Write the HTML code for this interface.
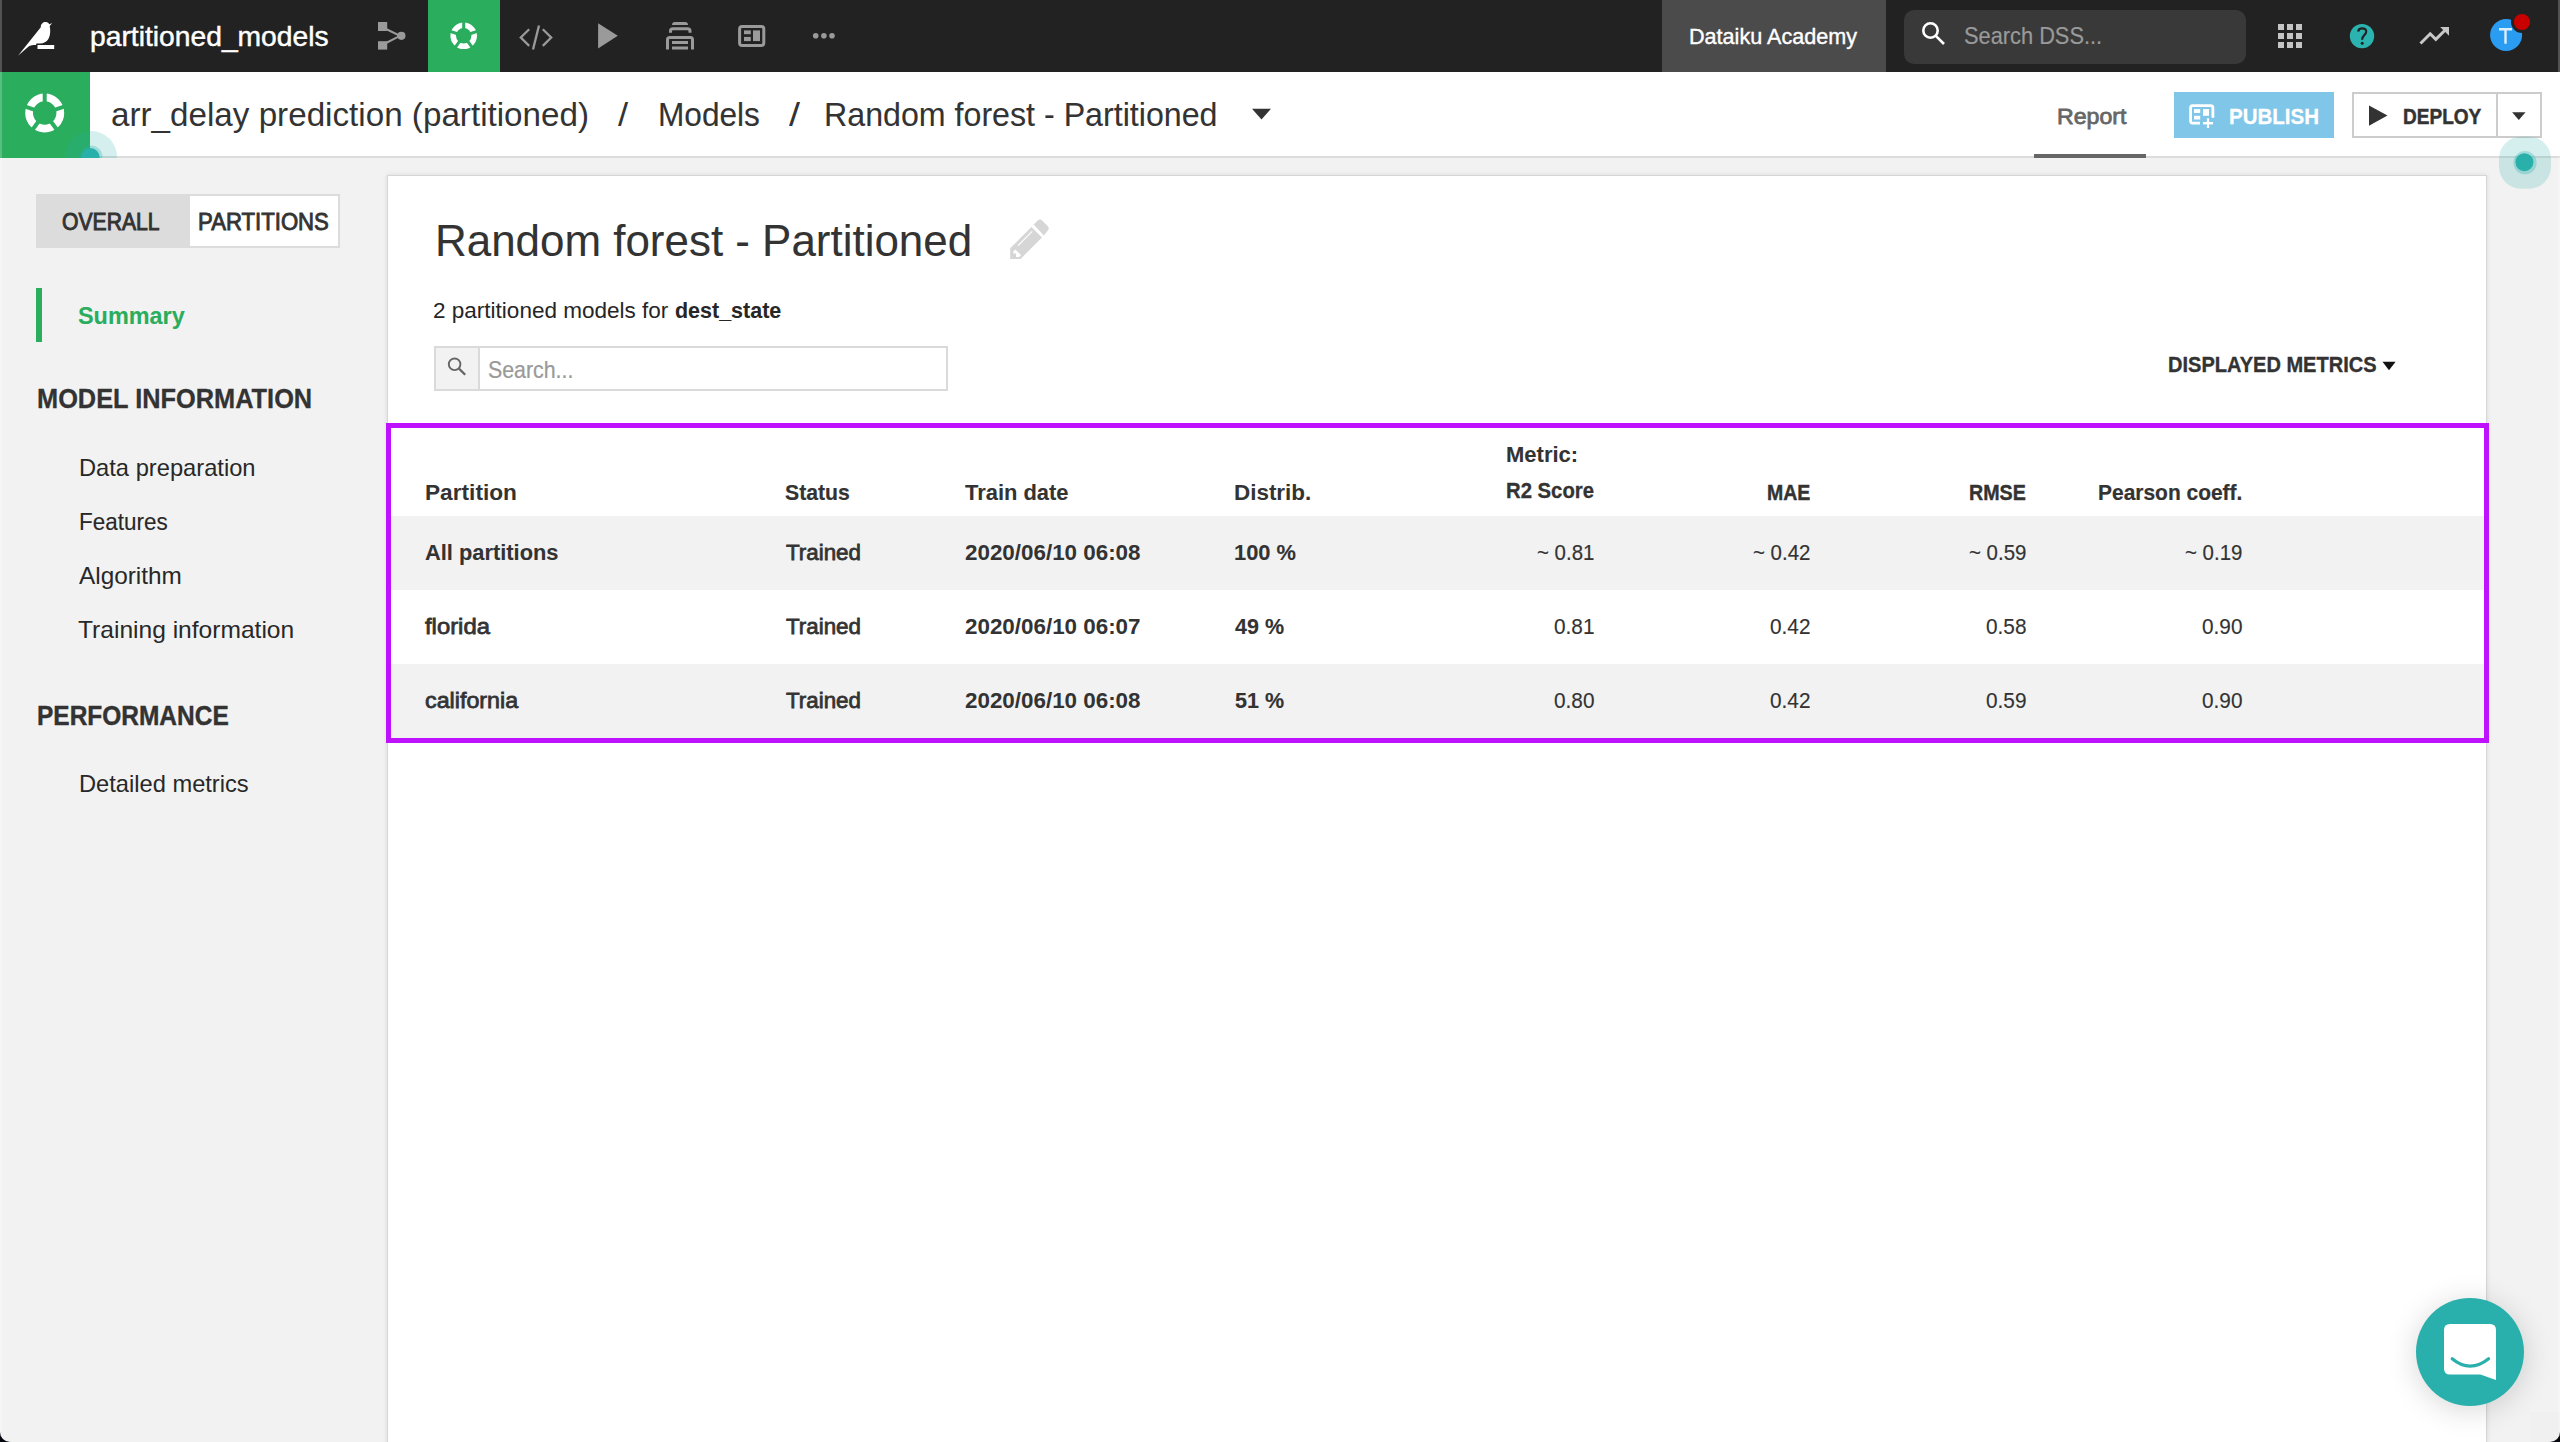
<!DOCTYPE html>
<html><head><meta charset="utf-8">
<style>
html,body{margin:0;padding:0;width:2560px;height:1442px;overflow:hidden;background:#f2f2f2;font-family:"Liberation Sans",sans-serif;}
.a{position:absolute;}
.t{position:absolute;white-space:nowrap;transform-origin:0 0;}
</style></head><body>
<!-- top bar -->
<div class="a" style="left:0;top:0;width:2560px;height:72px;background:#222"></div>
<div class="a" style="left:428px;top:0;width:72px;height:72px;background:#2aad5d"></div>
<div class="a" style="left:1662px;top:0;width:224px;height:72px;background:#4b4b4b"></div>
<div class="a" style="left:1904px;top:10px;width:342px;height:54px;background:#393939;border-radius:10px"></div>
<!-- second bar -->
<div class="a" style="left:0;top:72px;width:2560px;height:84px;background:#fff"></div>
<div class="a" style="left:0;top:156px;width:2560px;height:2px;background:#dcdcdc"></div>
<div class="a" style="left:0;top:72px;width:90px;height:86px;background:#2aad5d"></div>
<div class="a" style="left:2034px;top:154px;width:112px;height:4px;background:#666"></div>
<div class="a" style="left:2174px;top:92px;width:160px;height:46px;background:#80c6e9"></div>
<div class="a" style="left:2352px;top:92px;width:186px;height:42px;border:2px solid #ccc;background:#fff"></div>
<div class="a" style="left:2496px;top:92px;width:2px;height:46px;background:#ccc"></div>
<!-- card -->
<div class="a" style="left:387px;top:175px;width:2098px;height:1300px;background:#fff;border:1px solid #d6d6d6;box-shadow:0 0 5px rgba(0,0,0,0.10)"></div>
<!-- search input -->
<div class="a" style="left:434px;top:346px;width:510px;height:41px;border:2px solid #dadada;background:#fff"></div>
<div class="a" style="left:436px;top:348px;width:42px;height:41px;background:#f2f2f2;border-right:2px solid #dadada"></div>
<!-- sidebar toggle -->
<div class="a" style="left:36px;top:194px;width:304px;height:54px;background:#dcdcdc"></div>
<div class="a" style="left:190px;top:196px;width:148px;height:50px;background:#fff"></div>
<div class="a" style="left:36px;top:288px;width:6px;height:54px;background:#2aad5d"></div>
<!-- table -->
<div class="a" style="left:391px;top:516px;width:2094px;height:74px;background:#f2f2f2"></div>
<div class="a" style="left:391px;top:664px;width:2094px;height:74px;background:#f2f2f2"></div>
<div class="a" style="left:386px;top:423px;width:2093px;height:310px;border:5px solid #be12ff"></div>
<div class="t" style="left:90.39px;top:23px;font-size:28px;line-height:28px;font-weight:normal;color:#fff;transform:scaleX(1.0086);-webkit-text-stroke:0.45px #fff;">partitioned_models</div>
<div class="t" style="left:1688.62px;top:26px;font-size:22px;line-height:22px;font-weight:normal;color:#fff;transform:scaleX(0.9813);-webkit-text-stroke:0.39px #fff;">Dataiku Academy</div>
<div class="t" style="left:1964.19px;top:24px;font-size:24px;line-height:24px;font-weight:normal;color:#9a9a9a;transform:scaleX(0.9083);-webkit-text-stroke:0.19px #9a9a9a;">Search DSS...</div>
<div class="t" style="left:111.39px;top:98px;font-size:33px;line-height:33px;font-weight:normal;color:#333;transform:scaleX(1.0062);">arr_delay prediction (partitioned)</div>
<div class="t" style="left:617.80px;top:98px;font-size:33px;line-height:33px;font-weight:normal;color:#333;transform:scaleX(1.1000);">/</div>
<div class="t" style="left:657.68px;top:98px;font-size:33px;line-height:33px;font-weight:normal;color:#333;transform:scaleX(0.9578);-webkit-text-stroke:0.12px #333;">Models</div>
<div class="t" style="left:788.70px;top:98px;font-size:33px;line-height:33px;font-weight:normal;color:#333;transform:scaleX(1.2000);">/</div>
<div class="t" style="left:824.45px;top:98px;font-size:33px;line-height:33px;font-weight:normal;color:#333;transform:scaleX(0.9751);-webkit-text-stroke:0.07px #333;">Random forest - Partitioned</div>
<div class="t" style="left:2057.37px;top:106px;font-size:22.5px;line-height:22.5px;font-weight:normal;color:#666;transform:scaleX(1.0285);-webkit-text-stroke:0.77px #666;">Report</div>
<div class="t" style="left:2228.59px;top:106px;font-size:22.5px;line-height:22.5px;font-weight:bold;color:#fff;transform:scaleX(0.9118);-webkit-text-stroke:0.28px #fff;">PUBLISH</div>
<div class="t" style="left:2403.15px;top:106px;font-size:22.5px;line-height:22.5px;font-weight:bold;color:#333;transform:scaleX(0.8458);-webkit-text-stroke:0.49px #333;">DEPLOY</div>
<div class="t" style="left:62.48px;top:211px;font-size:23px;line-height:23px;font-weight:normal;color:#333;transform:scaleX(0.9192);-webkit-text-stroke:0.94px #333;">OVERALL</div>
<div class="t" style="left:197.64px;top:211px;font-size:23px;line-height:23px;font-weight:normal;color:#333;transform:scaleX(0.9632);-webkit-text-stroke:0.85px #333;">PARTITIONS</div>
<div class="t" style="left:78.00px;top:304px;font-size:24px;line-height:24px;font-weight:bold;color:#2aad5c;transform:scaleX(0.9751);-webkit-text-stroke:0.08px #2aad5c;">Summary</div>
<div class="t" style="left:37.08px;top:385px;font-size:27.5px;line-height:27.5px;font-weight:bold;color:#333;transform:scaleX(0.9222);-webkit-text-stroke:0.30px #333;">MODEL INFORMATION</div>
<div class="t" style="left:78.61px;top:456px;font-size:24px;line-height:24px;font-weight:normal;color:#282828;transform:scaleX(0.9873);">Data preparation</div>
<div class="t" style="left:78.66px;top:510px;font-size:24px;line-height:24px;font-weight:normal;color:#282828;transform:scaleX(0.9359);-webkit-text-stroke:0.13px #282828;">Features</div>
<div class="t" style="left:78.50px;top:564px;font-size:24px;line-height:24px;font-weight:normal;color:#282828;transform:scaleX(1.0142);">Algorithm</div>
<div class="t" style="left:77.80px;top:618px;font-size:24px;line-height:24px;font-weight:normal;color:#282828;transform:scaleX(1.0235);">Training information</div>
<div class="t" style="left:36.61px;top:702px;font-size:27.5px;line-height:27.5px;font-weight:bold;color:#333;transform:scaleX(0.8899);-webkit-text-stroke:0.42px #333;">PERFORMANCE</div>
<div class="t" style="left:78.61px;top:772px;font-size:24px;line-height:24px;font-weight:normal;color:#282828;transform:scaleX(0.9862);">Detailed metrics</div>
<div class="t" style="left:434.67px;top:218px;font-size:45px;line-height:45px;font-weight:normal;color:#333;transform:scaleX(0.9761);-webkit-text-stroke:0.09px #333;">Random forest - Partitioned</div>
<div class="t" style="left:432.98px;top:300px;font-size:22px;line-height:22px;font-weight:normal;color:#262626;transform:scaleX(1.0237);">2 partitioned models for</div>
<div class="t" style="left:674.70px;top:300px;font-size:22px;line-height:22px;font-weight:bold;color:#262626;transform:scaleX(0.9761);-webkit-text-stroke:0.07px #262626;">dest_state</div>
<div class="t" style="left:487.91px;top:358px;font-size:24px;line-height:24px;font-weight:normal;color:#999;transform:scaleX(0.8889);-webkit-text-stroke:0.23px #999;">Search...</div>
<div class="t" style="left:2168.11px;top:354px;font-size:22.5px;line-height:22.5px;font-weight:bold;color:#333;transform:scaleX(0.8907);-webkit-text-stroke:0.34px #333;">DISPLAYED METRICS</div>
<div class="t" style="left:424.99px;top:482px;font-size:22.5px;line-height:22.5px;font-weight:bold;color:#333;transform:scaleX(1.0077);">Partition</div>
<div class="t" style="left:785.20px;top:482px;font-size:22.5px;line-height:22.5px;font-weight:bold;color:#333;transform:scaleX(0.9421);-webkit-text-stroke:0.18px #333;">Status</div>
<div class="t" style="left:965.00px;top:482px;font-size:22.5px;line-height:22.5px;font-weight:bold;color:#333;transform:scaleX(0.9738);-webkit-text-stroke:0.08px #333;">Train date</div>
<div class="t" style="left:1234.00px;top:482px;font-size:22.5px;line-height:22.5px;font-weight:bold;color:#333;transform:scaleX(0.9966);">Distrib.</div>
<div class="t" style="left:1506.32px;top:444px;font-size:22.5px;line-height:22.5px;font-weight:bold;color:#333;transform:scaleX(0.9780);-webkit-text-stroke:0.07px #333;">Metric:</div>
<div class="t" style="left:1506.40px;top:480px;font-size:22.5px;line-height:22.5px;font-weight:bold;color:#333;transform:scaleX(0.9018);-webkit-text-stroke:0.31px #333;">R2 Score</div>
<div class="t" style="left:1766.63px;top:482px;font-size:22.5px;line-height:22.5px;font-weight:bold;color:#333;transform:scaleX(0.8675);-webkit-text-stroke:0.42px #333;">MAE</div>
<div class="t" style="left:1968.72px;top:482px;font-size:22.5px;line-height:22.5px;font-weight:bold;color:#333;transform:scaleX(0.8750);-webkit-text-stroke:0.39px #333;">RMSE</div>
<div class="t" style="left:2098.07px;top:482px;font-size:22.5px;line-height:22.5px;font-weight:bold;color:#333;transform:scaleX(0.9313);-webkit-text-stroke:0.22px #333;">Pearson coeff.</div>
<div class="t" style="left:425.40px;top:542px;font-size:22.5px;line-height:22.5px;font-weight:bold;color:#333;transform:scaleX(0.9709);-webkit-text-stroke:0.09px #333;">All partitions</div>
<div class="t" style="left:785.60px;top:542px;font-size:22.5px;line-height:22.5px;font-weight:normal;color:#333;transform:scaleX(0.9928);-webkit-text-stroke:0.77px #333;">Trained</div>
<div class="t" style="left:965.00px;top:542px;font-size:22.5px;line-height:22.5px;font-weight:bold;color:#333;transform:scaleX(0.9949);">2020/06/10 06:08</div>
<div class="t" style="left:1234.03px;top:542px;font-size:22.5px;line-height:22.5px;font-weight:bold;color:#333;transform:scaleX(0.9715);-webkit-text-stroke:0.09px #333;">100 %</div>
<div class="t" style="left:1537.09px;top:542px;font-size:22.5px;line-height:22.5px;font-weight:normal;color:#333;transform:scaleX(0.9081);-webkit-text-stroke:0.18px #333;">~ 0.81</div>
<div class="t" style="left:1753.09px;top:542px;font-size:22.5px;line-height:22.5px;font-weight:normal;color:#333;transform:scaleX(0.9081);-webkit-text-stroke:0.18px #333;">~ 0.42</div>
<div class="t" style="left:1969.09px;top:542px;font-size:22.5px;line-height:22.5px;font-weight:normal;color:#333;transform:scaleX(0.9081);-webkit-text-stroke:0.18px #333;">~ 0.59</div>
<div class="t" style="left:2185.09px;top:542px;font-size:22.5px;line-height:22.5px;font-weight:normal;color:#333;transform:scaleX(0.9081);-webkit-text-stroke:0.18px #333;">~ 0.19</div>
<div class="t" style="left:425.40px;top:616px;font-size:22.5px;line-height:22.5px;font-weight:normal;color:#333;transform:scaleX(1.0588);-webkit-text-stroke:0.77px #333;">florida</div>
<div class="t" style="left:785.60px;top:616px;font-size:22.5px;line-height:22.5px;font-weight:normal;color:#333;transform:scaleX(0.9928);-webkit-text-stroke:0.77px #333;">Trained</div>
<div class="t" style="left:965.00px;top:616px;font-size:22.5px;line-height:22.5px;font-weight:bold;color:#333;transform:scaleX(0.9949);">2020/06/10 06:07</div>
<div class="t" style="left:1235.00px;top:616px;font-size:22.5px;line-height:22.5px;font-weight:bold;color:#333;transform:scaleX(0.9556);-webkit-text-stroke:0.14px #333;">49 %</div>
<div class="t" style="left:1554.00px;top:616px;font-size:22.5px;line-height:22.5px;font-weight:normal;color:#333;transform:scaleX(0.9243);-webkit-text-stroke:0.14px #333;">0.81</div>
<div class="t" style="left:1770.00px;top:616px;font-size:22.5px;line-height:22.5px;font-weight:normal;color:#333;transform:scaleX(0.9243);-webkit-text-stroke:0.14px #333;">0.42</div>
<div class="t" style="left:1986.00px;top:616px;font-size:22.5px;line-height:22.5px;font-weight:normal;color:#333;transform:scaleX(0.9243);-webkit-text-stroke:0.14px #333;">0.58</div>
<div class="t" style="left:2202.00px;top:616px;font-size:22.5px;line-height:22.5px;font-weight:normal;color:#333;transform:scaleX(0.9243);-webkit-text-stroke:0.14px #333;">0.90</div>
<div class="t" style="left:425.40px;top:690px;font-size:22.5px;line-height:22.5px;font-weight:normal;color:#333;transform:scaleX(1.0350);-webkit-text-stroke:0.77px #333;">california</div>
<div class="t" style="left:785.60px;top:690px;font-size:22.5px;line-height:22.5px;font-weight:normal;color:#333;transform:scaleX(0.9928);-webkit-text-stroke:0.77px #333;">Trained</div>
<div class="t" style="left:965.00px;top:690px;font-size:22.5px;line-height:22.5px;font-weight:bold;color:#333;transform:scaleX(0.9949);">2020/06/10 06:08</div>
<div class="t" style="left:1235.00px;top:690px;font-size:22.5px;line-height:22.5px;font-weight:bold;color:#333;transform:scaleX(0.9556);-webkit-text-stroke:0.14px #333;">51 %</div>
<div class="t" style="left:1554.00px;top:690px;font-size:22.5px;line-height:22.5px;font-weight:normal;color:#333;transform:scaleX(0.9243);-webkit-text-stroke:0.14px #333;">0.80</div>
<div class="t" style="left:1770.00px;top:690px;font-size:22.5px;line-height:22.5px;font-weight:normal;color:#333;transform:scaleX(0.9243);-webkit-text-stroke:0.14px #333;">0.42</div>
<div class="t" style="left:1986.00px;top:690px;font-size:22.5px;line-height:22.5px;font-weight:normal;color:#333;transform:scaleX(0.9243);-webkit-text-stroke:0.14px #333;">0.59</div>
<div class="t" style="left:2202.00px;top:690px;font-size:22.5px;line-height:22.5px;font-weight:normal;color:#333;transform:scaleX(0.9243);-webkit-text-stroke:0.14px #333;">0.90</div>

<!-- ICONS -->
<svg class="a" style="left:0;top:0" width="2560" height="420" viewBox="0 0 2560 420">
 <defs><clipPath id="cl"><rect x="0" y="72" width="200" height="86"/></clipPath></defs>
 <!-- bird -->
 <path fill="#fff" d="M18,55.8 L40.8,27.2 C40.6,24 43,22 45.8,22 C47.6,22 48.8,23 49.4,24.3 L52.2,23 L49.7,26 C50.6,30 50.5,35.5 48.4,39 C46.6,42 43.6,43.4 40,43.4 L36.4,43.4 L36,45.1 C33,45.1 30.4,45.3 28.6,46.5 Z"/>
 <rect fill="#fff" x="37.5" y="45" width="16.7" height="4"/>
 <!-- flow -->
 <g fill="#9a9a9a">
  <rect x="378" y="22" width="9.2" height="9"/>
  <rect x="378" y="41.2" width="9.2" height="8.4"/>
  <circle cx="401.4" cy="35.8" r="4.1"/>
 </g>
 <path d="M386,29 L400,35.8 L386,43" stroke="#9a9a9a" stroke-width="2" fill="none"/>
 <!-- ml ring active -->
 <g transform="translate(463.7,35.8)">
  <circle r="10.5" fill="none" stroke="#fff" stroke-width="5.6"/>
  <g stroke="#2aad5d" stroke-width="3">
   <line x1="0" y1="-5" x2="0" y2="-15"/>
   <line x1="0" y1="-5" x2="0" y2="-15" transform="rotate(72)"/>
   <line x1="0" y1="-5" x2="0" y2="-15" transform="rotate(144)"/>
   <line x1="0" y1="-5" x2="0" y2="-15" transform="rotate(216)"/>
   <line x1="0" y1="-5" x2="0" y2="-15" transform="rotate(288)"/>
  </g>
 </g>
 <!-- code -->
 <g stroke="#9a9a9a" stroke-width="2.3" fill="none">
  <path d="M529.2,29.3 L520.8,37.5 L529.2,45.9"/>
  <path d="M542.8,29.3 L551.2,37.5 L542.8,45.9"/>
  <path d="M539,25.5 L533,49.5"/>
 </g>
 <!-- play -->
 <path fill="#9a9a9a" d="M598.1,23.2 L617.8,35.8 L598.1,48.6 Z"/>
 <!-- stack -->
 <g fill="none" stroke="#9a9a9a" stroke-width="3">
  <path d="M670.5,32.8 L670.5,31 Q670.5,28.8 673,28.8 L687.5,28.8 Q690,28.8 690,31 L690,32.8"/>
  <path d="M667.5,49.5 L667.5,39.5 Q667.5,37.5 670,37.5 L690.5,37.5 Q692.5,37.5 692.5,39.5 L692.5,49.5"/>
 </g>
 <g fill="#9a9a9a">
  <path d="M672,25 Q672,22 675,22 L685,22 Q688,22 688,25 Z"/>
  <rect x="672" y="41" width="16" height="3"/>
  <rect x="672" y="46.5" width="16" height="3"/>
 </g>
 <!-- dashboard -->
 <rect x="739.6" y="26.5" width="24.2" height="19" rx="2.5" fill="none" stroke="#9a9a9a" stroke-width="3"/>
 <g fill="#9a9a9a">
  <rect x="744" y="30.4" width="6.8" height="3.8"/>
  <rect x="744" y="36.9" width="6.8" height="4.2"/>
  <rect x="753" y="30.4" width="7" height="10.7"/>
 </g>
 <!-- dots -->
 <g fill="#9a9a9a"><circle cx="815.7" cy="35.8" r="2.8"/><circle cx="823.9" cy="35.8" r="2.8"/><circle cx="832" cy="35.8" r="2.8"/></g>
 <!-- search icon -->
 <g stroke="#fff" stroke-width="2.6" fill="none">
  <circle cx="1930.5" cy="30.5" r="7.2"/>
  <path d="M1935.8,35.8 L1944,44"/>
 </g>
 <!-- grid -->
 <g fill="#c4c4c4">
  <rect x="2278" y="24" width="6" height="6"/><rect x="2287" y="24" width="6" height="6"/><rect x="2296" y="24" width="6" height="6"/>
  <rect x="2278" y="33" width="6" height="6"/><rect x="2287" y="33" width="6" height="6"/><rect x="2296" y="33" width="6" height="6"/>
  <rect x="2278" y="42" width="6" height="6"/><rect x="2287" y="42" width="6" height="6"/><rect x="2296" y="42" width="6" height="6"/>
 </g>
 <!-- help -->
 <circle cx="2362" cy="36.1" r="12.2" fill="#2bb4af"/>
 <path d="M2358.2,31.6 C2358.4,29.6 2360,28.4 2362.2,28.4 C2364.6,28.4 2366.2,29.8 2366.2,31.8 C2366.2,34.6 2362.4,35.6 2362.2,39.2 L2362.2,39.8" fill="none" stroke="#222" stroke-width="2.2"/>
 <circle cx="2362.2" cy="43.3" r="1.5" fill="#222"/>
 <!-- trend -->
 <path d="M2420.5,43.5 L2430.2,33.8 L2435.8,39.4 L2445,30.2" fill="none" stroke="#c8c8c8" stroke-width="3"/>
 <path d="M2440.2,27 L2449,27 L2449,35.8 Z" fill="#c8c8c8"/>
 <!-- avatar -->
 <circle cx="2506.1" cy="35" r="16" fill="#2a9cf2"/>
 <path d="M2499,29.2 L2512,29.2 M2505.5,29.2 L2505.5,43.7" stroke="#dcefff" stroke-width="2.4" fill="none"/>
 <circle cx="2522" cy="22" r="11" fill="#222"/>
 <circle cx="2522" cy="22" r="8.1" fill="#c80000"/>
 <!-- ml ring second bar -->
 <g transform="translate(44.7,113)">
  <circle r="15.6" fill="none" stroke="#fff" stroke-width="7.8"/>
  <g stroke="#2aad5d" stroke-width="4">
   <line x1="0" y1="-8" x2="0" y2="-22"/>
   <line x1="0" y1="-8" x2="0" y2="-22" transform="rotate(72)"/>
   <line x1="0" y1="-8" x2="0" y2="-22" transform="rotate(144)"/>
   <line x1="0" y1="-8" x2="0" y2="-22" transform="rotate(216)"/>
   <line x1="0" y1="-8" x2="0" y2="-22" transform="rotate(288)"/>
  </g>
 </g>
 <!-- teal dot left -->
 <g clip-path="url(#cl)">
 <circle cx="91" cy="157" r="26" fill="rgba(42,177,172,0.2)"/>
 <circle cx="91" cy="157" r="11.5" fill="rgba(42,177,172,0.3)"/>
 <circle cx="90.5" cy="157" r="9" fill="#2ab0ab"/>
 </g>
 <!-- breadcrumb caret -->
 <path d="M1252,108.7 L1271,108.7 L1261.5,119.6 Z" fill="#333"/>
 <!-- publish icon -->
 <path d="M2200,123.1 L2192.5,123.1 Q2190.6,123.1 2190.6,121 L2190.6,107.7 Q2190.6,105.6 2192.5,105.6 L2210.8,105.6 Q2212.9,105.6 2212.9,107.7 L2212.9,117.7" fill="none" stroke="#fff" stroke-width="2.8"/>
 <g fill="#fff">
  <rect x="2194" y="109.1" width="6.2" height="3.9"/>
  <rect x="2194" y="115.8" width="6.2" height="3.7"/>
  <rect x="2203" y="109.1" width="6" height="6.7"/>
  <rect x="2206.9" y="118.3" width="2.2" height="9.7"/>
  <rect x="2203" y="122" width="10" height="2.4"/>
 </g>
 <!-- deploy -->
 <path d="M2369,105.5 L2387.5,115.6 L2369,125.7 Z" fill="#333"/>
 <path d="M2512.1,112.3 L2525.5,112.3 L2518.8,120 Z" fill="#333"/>
 <!-- teal dot right -->
 <rect x="2499" y="136.7" width="52" height="52" rx="22" fill="rgba(42,177,172,0.2)"/>
 <circle cx="2525" cy="162.7" r="11.6" fill="rgba(42,177,172,0.3)"/>
 <circle cx="2524.4" cy="162.2" r="9" fill="#2ab0ab"/>
 <!-- pencil -->
 <g fill="#d6d6d6">
  <path d="M1031.4,227 L1042,237.5 L1020.6,258.9 L1010.2,258.9 L1010.2,248.3 Z"/>
  <path d="M1033.7,224.6 L1037.6,220.7 Q1040,218.3 1042.4,220.7 L1047.6,225.9 Q1050,228.3 1047.6,230.7 L1043.9,235.4 Z"/>
 </g>
 <path d="M1018,245.6 L1032.2,231.4" stroke="#fff" stroke-width="1.2"/>
 <path d="M1013.3,251.4 L1015.3,249.4 L1021,255.1 L1019.2,256.9 L1016,256.9 L1016,253.6 L1013.3,253.6 Z" fill="#fff"/>
 <!-- search small -->
 <circle cx="454.6" cy="364.3" r="5.8" fill="none" stroke="#666" stroke-width="1.9"/>
 <path d="M459,368.6 L465.2,374.8" stroke="#666" stroke-width="2.2"/>
 <!-- displayed metrics caret -->
 <path d="M2382.5,361.7 L2395.6,361.7 L2389,370.3 Z" fill="#111"/>
</svg>
<!-- chat bubble -->
<div class="a" style="left:2416px;top:1298px;width:108px;height:108px;border-radius:50%;background:#2ab0ac;box-shadow:0 4px 30px rgba(0,0,0,0.16)"></div>
<svg class="a" style="left:2416px;top:1298px" width="108" height="108" viewBox="0 0 108 108">
 <path d="M34,25.9 Q28,25.9 28,31.9 L28,70.6 Q28,76.6 34,76.6 L64.4,76.6 L80,82 L80,31.9 Q80,25.9 74,25.9 Z" fill="#fff"/>
 <path d="M36.2,60.8 Q54,75.6 72.6,60.8" fill="none" stroke="#2ab0ac" stroke-width="3.2" stroke-linecap="round"/>
</svg>
<!-- window corners -->
<div class="a" style="left:0;top:1422px;width:20px;height:20px;background:#05080f"></div>
<div class="a" style="left:0;top:1412px;width:30px;height:30px;background:#f2f2f2;border-bottom-left-radius:10px"></div>
<div class="a" style="left:2540px;top:1422px;width:20px;height:20px;background:#05080f"></div>
<div class="a" style="left:2530px;top:1412px;width:30px;height:30px;background:#f0f0f0;border-bottom-right-radius:10px"></div>
<div class="a" style="left:0;top:0;width:2px;height:1432px;background:rgba(255,255,255,0.22)"></div>
<div class="a" style="left:2558px;top:0;width:2px;height:1432px;background:rgba(255,255,255,0.22)"></div>
</body></html>
